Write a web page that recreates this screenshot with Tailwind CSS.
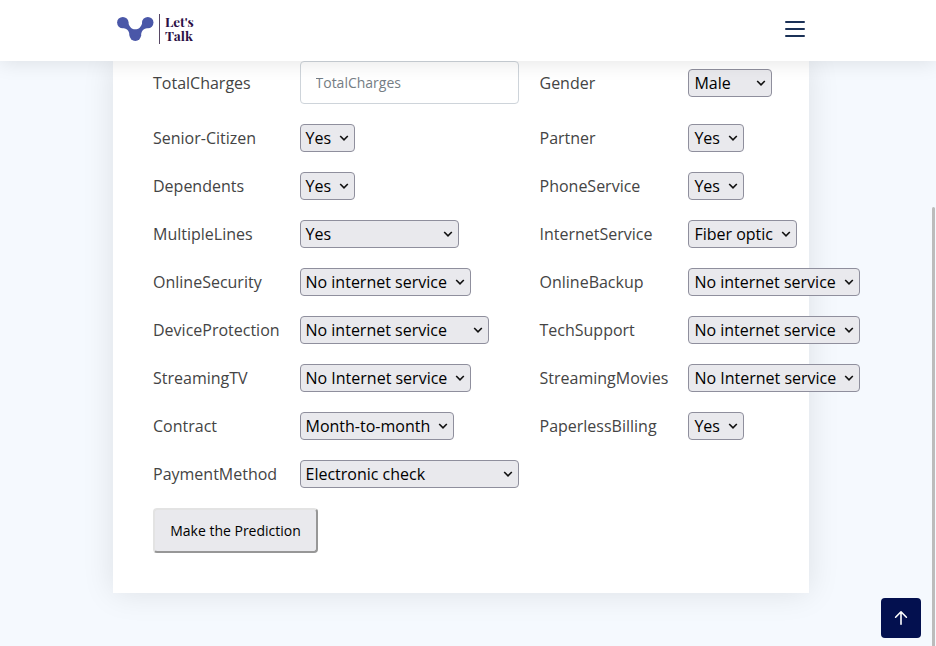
<!DOCTYPE html>
<html lang="en">
<head>
<meta charset="utf-8">
<title>Let's Talk</title>
<script src="https://cdn.jsdelivr.net/npm/@tailwindcss/browser@4"></script>
</head>
<body class="h-[646px] overflow-hidden bg-[#f5f9fe] font-['Open_Sans','Noto_Sans',sans-serif] text-base text-[#444444]">
<svg class="hidden"><symbol id="chev" viewBox="0 0 10 6"><path d="M1.2 1 L5 4.8 L8.8 1" fill="none" stroke="#111" stroke-width="1.6"/></symbol></svg>
<header class="relative z-10 flex h-[61px] items-start justify-between bg-white pr-[131px] pl-[116px] shadow-[0_2px_20px_rgba(0,0,0,0.1)]">
  <div class="flex pt-[14px]">
    <svg class="h-[30px] w-[44px]" viewBox="0 0 44 30"><g fill="#4a57a8"><circle cx="6.8" cy="8.6" r="5.7"/><circle cx="31.8" cy="8.6" r="5.7"/><circle cx="19.3" cy="21.2" r="5.8"/><path d="M12 6.5 C12.3 11.5 15 15.4 19.3 15.4 C23.6 15.4 26.3 11.5 26.6 6.5 L33 14.1 C28.2 14.1 25.3 16.5 25.1 21.2 L13.5 21.2 C13.3 16.5 10.4 14.1 5.6 14.1 Z"/></g><path d="M43.5 0V30" stroke="#574765"/></svg>
    <div class="ml-[5px] font-['Playfair_Display','Liberation_Serif',serif] text-[13.5px] leading-[14px] font-bold text-[#2b1046]"><div class="h-[14px]">Let's</div><div class="h-[14px]">Talk</div></div>
  </div>
  <svg class="mt-[19px] h-[20px] w-[20px]" viewBox="0 0 20 20"><path d="M1 3H19M1 10H19M1 17H19" stroke="#1b3157" stroke-width="2" stroke-linecap="round"/></svg>
</header>
<main class="ml-[113px] h-[532px] w-[696px] bg-white px-[40px] shadow-[0_0_30px_rgba(0,0,0,0.1)]">
  <form>
    <div class="grid grid-cols-[147px_239.5px_148.5px_172px] grid-rows-[43px] items-center pb-[10px] leading-6">
      <label class="pt-px">TotalCharges</label><input class="h-[43px] w-[219px] rounded-[4px] border border-[#ced4da] bg-white pr-[15px] pl-[14.5px] text-sm placeholder:text-[#757d84]" placeholder="TotalCharges">
      <label class="pt-px">Gender</label><button type="button" class="mt-px flex h-[28px] w-[84px] items-center justify-between rounded-[4px] border border-[#8f8f9d] bg-[#e9e9ed] pr-[5px] pl-[5.4px] text-black"><span>Male</span><svg class="h-[6px] w-[10px]"><use href="#chev"/></svg></button>
    </div>
    <div id="fields" class="grid auto-rows-[48px] grid-cols-[147px_239.5px_148.5px_172px] items-center leading-6"></div>
    <button type="button" class="mt-[10px] block h-[45px] w-[165px] rounded-[4px] border-2 border-t-[#e3e3e3] border-r-[#979797] border-b-[#979797] border-l-[#e3e3e3] bg-[#e9e9ed] text-sm text-black">Make the Prediction</button>
  </form>
</main>
<a class="fixed top-[598px] left-[881px] flex h-[40px] w-[40px] items-center justify-center rounded-[4px] bg-[#03104f]"><svg class="h-[16px] w-[16px]" viewBox="0 0 16 16" fill="none" stroke="#fff" stroke-width="1.6" stroke-linecap="round" stroke-linejoin="round"><path d="M8 14.3V2M2.6 7.2 8 1.8 13.4 7.2"/></svg></a>
<div class="fixed top-[207px] left-[932px] h-[450px] w-[3px] rounded-full bg-[#bcbcbc]"></div>
<script>
const fields = [
  ["Senior-Citizen", "Yes", 55], ["Partner", "Yes", 56],
  ["Dependents", "Yes", 55], ["PhoneService", "Yes", 56],
  ["MultipleLines", "Yes", 159], ["InternetService", "Fiber optic", 109],
  ["OnlineSecurity", "No internet service", 171], ["OnlineBackup", "No internet service", 172],
  ["DeviceProtection", "No internet service", 189], ["TechSupport", "No internet service", 172],
  ["StreamingTV", "No Internet service", 171], ["StreamingMovies", "No Internet service", 172],
  ["Contract", "Month-to-month", 154], ["PaperlessBilling", "Yes", 56],
  ["PaymentMethod", "Electronic check", 219]
];
document.getElementById("fields").innerHTML = fields.map(([label, value, width], i) =>
  `<label>${label}</label><button type="button" class="${i % 2 ? "pl-[5.4px]" : "pl-[4.5px]"} flex h-[28px] items-center justify-between rounded-[4px] border border-[#8f8f9d] bg-[#e9e9ed] pr-[5px] whitespace-nowrap text-black" style="width:${width}px"><span>${value}</span><svg class="h-[6px] w-[10px] shrink-0"><use href="#chev"/></svg></button>`
).join("");
</script>
</body>
</html>
